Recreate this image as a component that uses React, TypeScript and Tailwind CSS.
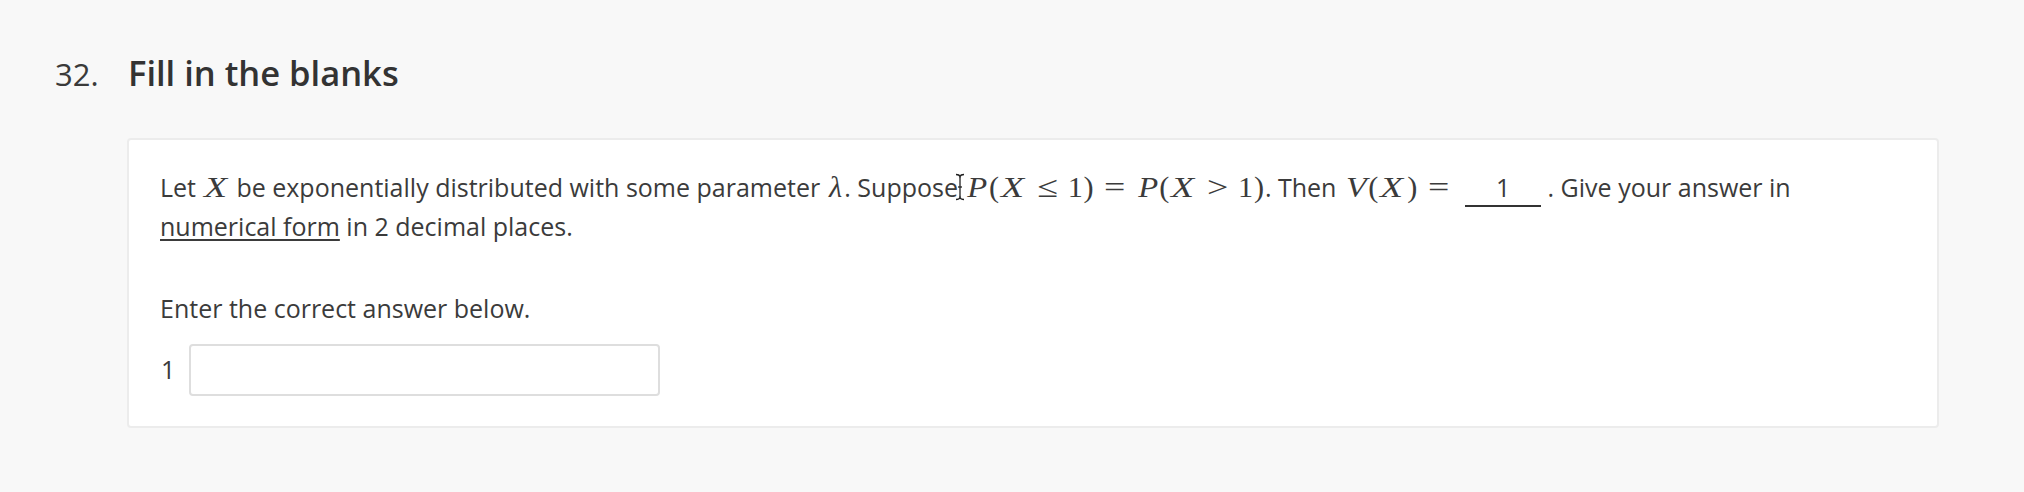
import React from "react";

const serif = { fontFamily: '"Liberation Serif", "DejaVu Serif", serif' };

const M = ({ children }: { children: React.ReactNode }) => (
  <span className="relative text-[1.21em] leading-none" style={serif}>
    {children}
  </span>
);

// glyph boxes with KaTeX-like advance widths
const Px = () => <span className="inline-block w-[0.781em] scale-x-[1.08] pr-[0.04em] text-right italic">P</span>;
const Xx = () => <span className="mr-[0.078em] inline-block w-[0.828em] scale-x-[1.25] text-center italic">X</span>;
const Vx = () => <span className="inline-block w-[0.805em] scale-x-[1.12] pr-[0.06em] text-right italic">V</span>;
const Lx = () => <span className="inline-block w-[0.583em] text-center italic">λ</span>;
const Lp = () => <span className="inline-block w-[0.389em] text-center">(</span>;
const Rp = () => <span className="inline-block w-[0.389em] text-center">)</span>;
const One = () => <span className="inline-block w-[0.5em] text-center">1</span>;
const Rel = ({ children }: { children: React.ReactNode }) => (
  <span className="mx-[0.278em] inline-block w-[0.778em] scale-x-[1.25] text-center">{children}</span>
);

export default function App() {
  return (
    <div
      className="min-h-[492px] w-full bg-[#f8f8f8] text-[#333333]"
      style={{ fontFamily: '"Open Sans", "Noto Sans", sans-serif' }}
    >
      <div className="pl-[55px] pr-[85px] pt-[49px]">
        <div className="flex items-baseline leading-[48px]">
          <span className="w-[73px] text-[31px] text-[#3a3a3a]">32.</span>
          <h1 className="text-[34.5px] font-semibold text-[#333333]">Fill in the blanks</h1>
        </div>
        <div className="ml-[72px] mt-[40px] rounded-[4px] border-2 border-[#ececec] bg-white px-[31px] pb-[30px] pt-[28px]">
          <p className="text-[25px] leading-[38px] text-[#3b3b3b]">
            Let{" "}
            <M>
              <Xx />
            </M>{" "}
            be exponentially distributed with some parameter{" "}
            <M>
              <Lx />
            </M>
            . Suppose{" "}
            <M>
              <svg
                className="absolute left-[-10px] top-[3px]"
                width="12"
                height="28"
                viewBox="0 0 12 28"
                fill="none"
                stroke="#222"
                strokeWidth="1.3"
              >
                <path d="M2 1.5 C4 1.5 5.5 2 6 3.5 C6.5 2 8 1.5 10 1.5" />
                <path d="M6 3.5 V24.5" />
                <path d="M2 26.5 C4 26.5 5.5 26 6 24.5 C6.5 26 8 26.5 10 26.5" />
                <path d="M4 14 H8" />
              </svg>
              <Px />
              <Lp />
              <Xx />
              <Rel>≤</Rel>
              <One />
              <Rp />
              <Rel>=</Rel>
              <Px />
              <Lp />
              <Xx />
              <Rel>&gt;</Rel>
              <One />
              <Rp />
            </M>
            . Then{" "}
            <M>
              <Vx />
              <Lp />
              <Xx />
              <Rp />
              <Rel>=</Rel>
            </M>{" "}
            <span className="inline-block w-[76px] border-b-2 border-[#333333] text-center leading-[36px]">1</span>{" "}
            . Give your answer in
            <br />
            <span className="underline decoration-[1.5px] underline-offset-[3px]">numerical form</span> in 2 decimal
            places.
          </p>
          <p className="mt-[44px] text-[25px] leading-[38px] text-[#3b3b3b]">Enter the correct answer below.</p>
          <div className="mt-[17px] flex items-center">
            <span className="w-[29px] pl-[1px] text-[25px] text-[#3b3b3b]">1</span>
            <input
              type="text"
              className="h-[52px] w-[471px] rounded-[4px] border-2 border-[#dedede] bg-white px-3 text-[25px] outline-none"
            />
          </div>
        </div>
      </div>
    </div>
  );
}
